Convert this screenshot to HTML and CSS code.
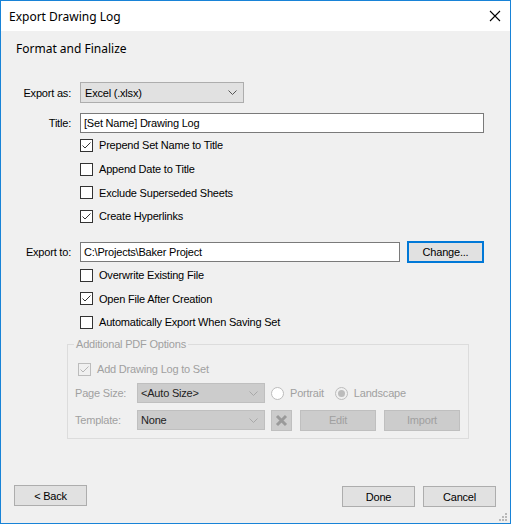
FILE: index.html
```html
<!DOCTYPE html>
<html>
<head>
    <meta charset="UTF-8">
    <title>Export Drawing Log</title>
    <link rel="stylesheet" href="styles.css">
</head>
<body>

<div class="window">
    <div class="titlebar">
        <span class="title">Export Drawing Log</span>
        <svg class="close" width="12" height="12" viewBox="0 0 12 12"><path d="M1 1 L11 11 M11 1 L1 11" stroke="#000" stroke-width="1.1" fill="none"/></svg>
    </div>

    <div class="content">
        <div class="heading">Format and Finalize</div>

        <div class="row row-format">
            <label class="lbl">Export as:</label>
            <div class="combo combo-format">
                <span>Excel (.xlsx)</span>
                <svg class="chev" width="9" height="5" viewBox="0 0 9 5"><path d="M0.5 0.5 L4.5 4.5 L8.5 0.5" stroke="#555" fill="none"/></svg>
            </div>
        </div>

        <div class="row row-title">
            <label class="lbl">Title:</label>
            <div class="textbox textbox-title">[Set Name] Drawing Log</div>
        </div>

        <div class="check h24 on"><span class="box"><svg width="11" height="11" viewBox="0 0 11 11"><path d="M1.5 5.5 L4 8 L9.5 2.5" stroke="#333" fill="none"/></svg></span>Prepend Set Name to Title</div>
        <div class="check h24"><span class="box"></span>Append Date to Title</div>
        <div class="check h23"><span class="box"></span>Exclude Superseded Sheets</div>
        <div class="check h24 on"><span class="box"><svg width="11" height="11" viewBox="0 0 11 11"><path d="M1.5 5.5 L4 8 L9.5 2.5" stroke="#333" fill="none"/></svg></span>Create Hyperlinks</div>

        <div class="row row-path">
            <label class="lbl">Export to:</label>
            <div class="textbox textbox-path">C:\Projects\Baker Project</div>
            <button class="btn btn-change">Change...</button>
        </div>

        <div class="check h24"><span class="box"></span>Overwrite Existing File</div>
        <div class="check h23 on"><span class="box"><svg width="11" height="11" viewBox="0 0 11 11"><path d="M1.5 5.5 L4 8 L9.5 2.5" stroke="#333" fill="none"/></svg></span>Open File After Creation</div>
        <div class="check h24"><span class="box"></span>Automatically Export When Saving Set</div>

        <!-- 灰掉的 PDF 选项分组 -->
        <div class="group">
            <div class="group-title">Additional PDF Options</div>
            <div class="check check-off"><span class="box"><svg width="11" height="11" viewBox="0 0 11 11"><path d="M1.5 5.5 L4 8 L9.5 2.5" stroke="#b5b5b5" fill="none"/></svg></span>Add Drawing Log to Set</div>
            <div class="grow grow-size">
                <span class="glbl">Page Size:</span>
                <div class="combo combo-off">
                    <span>&lt;Auto Size&gt;</span>
                    <svg class="chev" width="9" height="5" viewBox="0 0 9 5"><path d="M0.5 0.5 L4.5 4.5 L8.5 0.5" stroke="#a8a8a8" fill="none"/></svg>
                </div>
                <span class="radio radio-portrait"><span class="dot"></span>Portrait</span>
                <span class="radio radio-landscape sel"><span class="dot"></span>Landscape</span>
            </div>
            <div class="grow grow-template">
                <span class="glbl">Template:</span>
                <div class="combo combo-off">
                    <span>None</span>
                    <svg class="chev" width="9" height="5" viewBox="0 0 9 5"><path d="M0.5 0.5 L4.5 4.5 L8.5 0.5" stroke="#a8a8a8" fill="none"/></svg>
                </div>
                <span class="btn-off btn-x"><svg width="13" height="13" viewBox="0 0 13 13"><path d="M2 2 L11 11 M11 2 L2 11" stroke="#9a9a9a" stroke-width="3" fill="none"/></svg></span>
                <span class="btn-off btn-edit">Edit</span>
                <span class="btn-off btn-import">Import</span>
            </div>
        </div>
    </div>

    <div class="footer">
        <button class="btn btn-back">&lt; Back</button>
        <span class="spacer"></span>
        <button class="btn btn-done">Done</button>
        <button class="btn btn-cancel">Cancel</button>
    </div>
    <svg class="grip" width="9" height="9" viewBox="0 0 9 9">
        <rect x="6" y="0" width="2" height="2" fill="#b8b8b8"/>
        <rect x="3" y="3" width="2" height="2" fill="#b8b8b8"/>
        <rect x="6" y="3" width="2" height="2" fill="#b8b8b8"/>
        <rect x="0" y="6" width="2" height="2" fill="#b8b8b8"/>
        <rect x="3" y="6" width="2" height="2" fill="#b8b8b8"/>
        <rect x="6" y="6" width="2" height="2" fill="#b8b8b8"/>
    </svg>
</div>

</body>
</html>
```

FILE: styles.css
```css
* {
    margin: 0;
    padding: 0;
    box-sizing: border-box;
}
body {
    background: #fff;
}
.window {
    width: 511px;
    height: 524px;
    border: 1px solid #1883d7;
    background: #f0f0f0;
    display: flex;
    flex-direction: column;
    position: relative;
    font-family: "Liberation Sans", Arial, sans-serif;
    font-size: 11px;
    letter-spacing: -0.2px;
    color: #000;
}
.titlebar {
    height: 30px;
    background: #fff;
    display: flex;
    align-items: center;
    padding-left: 8px;
    padding-right: 9px;
}
.title {
    flex: 1;
    font-family: "Noto Sans", "Open Sans", sans-serif;
    font-size: 12px;
    letter-spacing: 0;
}
.heading {
    margin-top: 10px;
    padding-left: 15px;
    height: 16px;
    line-height: 16px;
    font-family: "Noto Sans", "Open Sans", sans-serif;
    font-size: 12px;
    letter-spacing: 0;
}

/* 标签 + 控件 的一行 */
.row {
    display: flex;
    align-items: center;
}
.lbl {
    width: 70px;
    margin-right: 9px;
    text-align: right;
}
.row-format {
    margin-top: 25px;
    height: 21px;
}
.row-title {
    margin-top: 10px;
    height: 20px;
}
.row-path {
    margin-top: 13px;
    height: 22px;
}

.combo {
    height: 21px;
    display: flex;
    align-items: center;
    justify-content: space-between;
    padding: 0 6px 0 4px;
    background: #e1e1e1;
    border: 1px solid #adadad;
}
.combo-format {
    width: 164px;
}
.chev {
    display: block;
}
.textbox {
    height: 20px;
    line-height: 18px;
    background: #fff;
    border: 1px solid #7a7a7a;
    padding-left: 3px;
    white-space: nowrap;
}
.textbox-title {
    width: 404px;
}
.textbox-path {
    width: 320px;
}

.btn {
    font-family: inherit;
    font-size: 11px;
    letter-spacing: -0.2px;
    color: #000;
    background: #e1e1e1;
    border: 1px solid #adadad;
    height: 21px;
    width: 73px;
}
.btn-change {
    margin-left: 7px;
    width: 77px;
    height: 22px;
    border: 2px solid #0078d7;
}

/* 复选框 */
.check {
    display: flex;
    align-items: center;
    padding-left: 79px;
}
.h24 {
    height: 24px;
}
.h23 {
    height: 23px;
}
.box {
    width: 13px;
    height: 13px;
    border: 1px solid #333;
    background: #fff;
    margin-right: 6px;
    display: flex;
    align-items: center;
    justify-content: center;
}
.box svg {
    display: block;
}

/* 分组框 */
.group {
    margin-top: 10px;
    margin-left: 66px;
    width: 402px;
    border: 1px solid #dcdcdc;
    padding-bottom: 8px;
    color: #a0a0a0;
}
.group-title {
    display: table;
    margin-top: -7px;
    margin-left: 6px;
    padding: 0 2px;
    height: 13px;
    line-height: 13px;
    background: #f0f0f0;
}
.check-off {
    margin-top: 6px;
    height: 24px;
    padding-left: 10px;
}
.check-off .box {
    border-color: #bcbcbc;
    background: #f0f0f0;
}
.grow {
    display: flex;
    align-items: center;
    height: 20px;
    padding-left: 7px;
}
.grow-size {
    margin-top: 2px;
}
.grow-template {
    margin-top: 7px;
}
.glbl {
    width: 62px;
}
.combo-off {
    width: 128px;
    height: 20px;
    background: #cccccc;
    border-color: #bfbfbf;
    color: #222;
    padding-left: 3px;
}
.radio {
    display: flex;
    align-items: center;
}
.radio-portrait {
    margin-left: 6px;
}
.radio-landscape {
    margin-left: 11px;
}
.dot {
    width: 13px;
    height: 13px;
    border-radius: 50%;
    border: 1px solid #bcbcbc;
    background: #fff;
    margin-right: 6px;
    display: flex;
    align-items: center;
    justify-content: center;
}
.sel .dot {
    background: #f0f0f0;
}
.sel .dot::after {
    content: "";
    width: 7px;
    height: 7px;
    border-radius: 50%;
    background: #bcbcbc;
}
.btn-off {
    height: 21px;
    background: #cccccc;
    border: 1px solid #bfbfbf;
    color: #a0a0a0;
    display: flex;
    align-items: center;
    justify-content: center;
}
.btn-x {
    margin-left: 6px;
    width: 21px;
}
.btn-edit {
    margin-left: 8px;
    width: 76px;
}
.btn-import {
    margin-left: 8px;
    width: 76px;
}

.footer {
    margin-top: auto;
    display: flex;
    align-items: flex-end;
    padding: 0 14px 16px 13px;
}
.btn-back {
    margin-bottom: 1px;
}
.spacer {
    flex: 1;
}
.btn-cancel {
    margin-left: 8px;
}
.grip {
    position: absolute;
    right: 2px;
    bottom: 1px;
}
```
